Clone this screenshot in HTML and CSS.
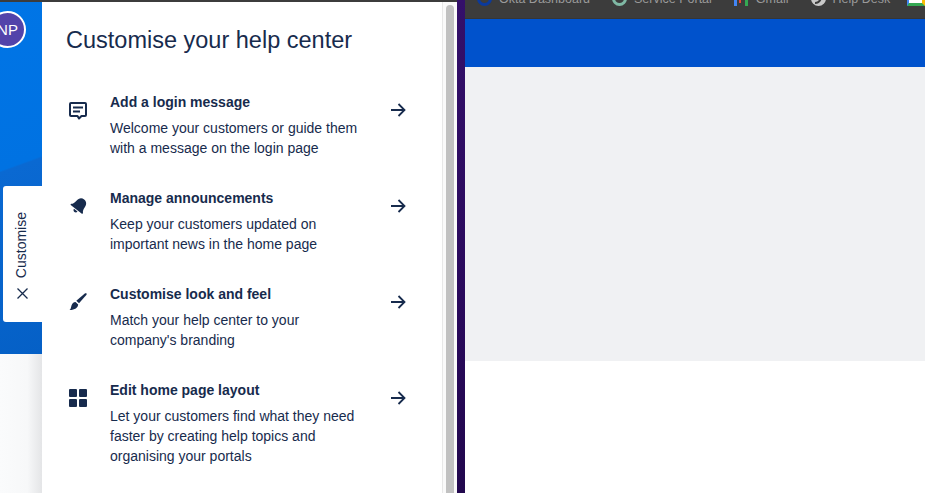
FILE: index.html
```html
<!DOCTYPE html>
<html lang="en">

<head>
    <meta charset="UTF-8">
    <meta name="viewport" content="width=device-width, initial-scale=1.0">
    <title>Customise your help center</title>
    <link rel="stylesheet" href="styles.css">
</head>

<body>
    <div class="left-window">
        <div class="top-strip"></div>
        <div class="workspace">
            <!-- Blue side strip -->
            <div class="sidebar">
                <div class="sidebar-blue">
                    <div class="avatar">NP</div>
                </div>
                <div class="tab">
                    <span class="tab-label">Customise</span>
                    <svg class="tab-close" width="11" height="11" viewBox="0 0 11 11">
                        <path d="M.5.5l10 10M10.500.5l-10 10" stroke="#172b4d" stroke-width="1.300" fill="none" />
                    </svg>
                </div>
            </div>

            <!-- Customise panel -->
            <div class="panel">
                <h1>Customise your help center</h1>

                <div class="row">
                    <svg class="row-icon" width="24" height="24" viewBox="0 0 24 24">
                        <path d="M5 5h14a1 1 0 0 1 1 1v11a1 1 0 0 1-1 1h-3.500L13 20.500 11.500 18H5a1 1 0 0 1-1-1V6a1 1 0 0 1 1-1z" fill="none" stroke="#172b4d" stroke-width="2" stroke-linejoin="round" />
                        <path d="M7 8.500h10v2H7zM7 12.500h7v2H7z" fill="#172b4d" />
                    </svg>
                    <div class="row-text">
                        <h2>Add a login message</h2>
                        <p>Welcome your customers or guide them<br>with a message on the login page</p>
                    </div>
                    <svg class="row-arrow" width="16" height="16" viewBox="0 0 16 16">
                        <path d="M1 8h13M8.500 2l6 6-6 6" fill="none" stroke="#172b4d" stroke-width="1.800" />
                    </svg>
                </div>

                <div class="row">
                    <svg class="row-icon" width="24" height="24" viewBox="0 0 24 24">
                        <g transform="translate(1 0) rotate(38 12 12) translate(12 12) scale(.88) translate(-12 -12)" fill="#172b4d">
                            <path d="M12 2.500c3.800 0 5.800 2.800 6 6.500.2 3 .8 5 2.500 6.500v1.500h-17v-1.500c1.700-1.500 2.300-3.500 2.500-6.500.2-3.700 2.200-6.500 6-6.500z" />
                            <path d="M9.500 18h5c0 1.500-1.100 2.500-2.500 2.500S9.500 19.500 9.500 18z" />
                        </g>
                    </svg>
                    <div class="row-text">
                        <h2>Manage announcements</h2>
                        <p>Keep your customers updated on<br>important news in the home page</p>
                    </div>
                    <svg class="row-arrow" width="16" height="16" viewBox="0 0 16 16">
                        <path d="M1 8h13M8.500 2l6 6-6 6" fill="none" stroke="#172b4d" stroke-width="1.800" />
                    </svg>
                </div>

                <div class="row">
                    <svg class="row-icon" width="24" height="24" viewBox="0 0 24 24">
                        <path d="M20.500 3.500c.4.400.200 1-.200 1.500l-7.300 8.200-2.700-2.500 8.500-7.200c.500-.400 1.300-.400 1.700 0z" fill="#172b4d" />
                        <path d="M9.500 12l2.700 2.500c-.300 3-3 5.500-8.700 5.500 1.500-1 1.300-2.500 2-4.500.600-1.800 2-3.400 4-3.500z" fill="#172b4d" />
                    </svg>
                    <div class="row-text">
                        <h2>Customise look and feel</h2>
                        <p>Match your help center to your<br>company's branding</p>
                    </div>
                    <svg class="row-arrow" width="16" height="16" viewBox="0 0 16 16">
                        <path d="M1 8h13M8.500 2l6 6-6 6" fill="none" stroke="#172b4d" stroke-width="1.800" />
                    </svg>
                </div>

                <div class="row">
                    <svg class="row-icon" width="24" height="24" viewBox="0 0 24 24">
                        <rect x="3" y="3" width="8" height="8" rx="1" fill="#172b4d" />
                        <rect x="13" y="3" width="8" height="8" rx="1" fill="#172b4d" />
                        <rect x="3" y="13" width="8" height="8" rx="1" fill="#172b4d" />
                        <rect x="13" y="13" width="8" height="8" rx="1" fill="#172b4d" />
                    </svg>
                    <div class="row-text">
                        <h2>Edit home page layout</h2>
                        <p>Let your customers find what they need<br>faster by creating help topics and<br>organising your portals</p>
                    </div>
                    <svg class="row-arrow" width="16" height="16" viewBox="0 0 16 16">
                        <path d="M1 8h13M8.500 2l6 6-6 6" fill="none" stroke="#172b4d" stroke-width="1.800" />
                    </svg>
                </div>
            </div>

            <div class="scroll-track">
                <div class="scroll-thumb"></div>
            </div>
        </div>
    </div>

    <div class="divider"></div>

    <div class="right-window">
        <!-- Bookmarks bar, cut off by the top of the picture -->
        <div class="bookmarks">
            <div class="bookmark okta">
                <span class="ring ring-okta"></span>
                <span>Okta Dashboard</span>
            </div>
            <div class="bookmark portal">
                <span class="ring ring-portal"></span>
                <span>Service Portal</span>
            </div>
            <div class="bookmark gmail">
                <svg width="14" height="14" viewBox="0 0 14 14">
                    <rect x="0" y="0" width="3" height="14" fill="#4285f4" />
                    <rect x="11" y="0" width="3" height="14" fill="#34a853" />
                    <rect x="5" y="8" width="2" height="3" fill="#ea4335" />
                </svg>
                <span>Gmail</span>
            </div>
            <div class="bookmark help">
                <svg width="15" height="15" viewBox="0 0 15 15">
                    <circle cx="7.500" cy="7.500" r="7.500" fill="#c8c8c8" />
                    <path d="M4 12c3 0 5-1.500 6-5" fill="none" stroke="#3c3c3c" stroke-width="2" />
                </svg>
                <span>Help Desk</span>
            </div>
            <div class="calendar"></div>
        </div>
        <div class="blue-band"></div>
        <div class="grey-band"></div>
    </div>
</body>

</html>
```

FILE: styles.css
```css
* {
    margin: 0;
    padding: 0;
    box-sizing: border-box;
    font-family: 'Liberation Sans', Arial, sans-serif;
}

body {
    display: flex;
    width: 925px;
    height: 493px;
    overflow: hidden;
    background-color: #fff;
    color: #172b4d;
}

.left-window {
    width: 457px;
    display: flex;
    flex-direction: column;
}

.top-strip {
    height: 2px;
    background-color: #3c3c3c;
}

.workspace {
    flex: 1;
    display: flex;
    min-height: 0;
}

.sidebar {
    width: 42px;
    position: relative;
    background: linear-gradient(90deg, #fafbfc 0%, #f7f8f9 65%, #e4e5e7 100%);
}

.sidebar-blue {
    height: 352px;
    padding-top: 9px;
    background: linear-gradient(160deg, #0075e6 0%, #0072e2 46%, #0a69d2 46.500%, #0560c6 100%);
    overflow: hidden;
}

.avatar {
    width: 37px;
    height: 37px;
    margin-left: -11px;
    border: 2px solid #fff;
    border-radius: 50%;
    background-color: #5243aa;
    color: #fff;
    font-size: 15px;
    line-height: 33px;
    text-align: center;
}

.tab {
    position: absolute;
    top: 184px;
    left: 3px;
    width: 39px;
    height: 136px;
    padding: 26px 0 23px;
    display: flex;
    flex-direction: column;
    justify-content: space-between;
    align-items: center;
    background-color: #fff;
    border-radius: 3px 0 0 3px;
}

.tab-label {
    writing-mode: vertical-rl;
    transform: rotate(180deg);
    margin-right: 4px;
    font-size: 14px;
    line-height: 16px;
}

.tab-close {
    flex: none;
}

.panel {
    width: 400px;
    padding: 0 0 0 24px;
    background-color: #fff;
    overflow: hidden;
}

h1 {
    margin-top: 24px;
    margin-bottom: 38px;
    font-size: 23.500px;
    font-weight: 400;
    line-height: 28px;
    white-space: nowrap;
}

.row {
    display: flex;
    align-items: flex-start;
    height: 96px;
}

.row-icon {
    flex: none;
    margin-top: 6px;
}

.row-text {
    width: 270px;
    margin-left: 20px;
}

h2 {
    font-size: 14px;
    font-weight: 700;
    line-height: 20px;
    margin-bottom: 6px;
}

.row-text p {
    font-size: 14px;
    line-height: 20px;
    white-space: nowrap;
}

.row-arrow {
    flex: none;
    margin-left: 10px;
    margin-top: 10px;
}

.scroll-track {
    width: 15px;
    padding: 3px 3px 0 3px;
    background-color: #fafafa;
    border-left: 1px solid #e8e8e8;
}

.scroll-thumb {
    height: 100%;
    background-color: #c1c1c1;
    border-radius: 4px 4px 0 0;
}

.divider {
    width: 8px;
    background: linear-gradient(180deg, #34106a 0%, #2a0a5c 60%, #22084e 100%);
}

.right-window {
    flex: 1;
    display: flex;
    flex-direction: column;
}

.bookmarks {
    height: 19px;
    background-color: #3c3c3c;
    border-bottom: 1px solid #363636;
    overflow: hidden;
    position: relative;
    display: flex;
    align-items: flex-start;
}

.bookmark {
    display: flex;
    align-items: center;
    gap: 7px;
    margin-top: -9px;
    height: 15px;
    font-size: 12.500px;
    color: #9a9a9a;
    white-space: nowrap;
}

.okta {
    margin-left: 12px;
}

.portal {
    margin-left: 22px;
}

.gmail {
    margin-left: 22px;
    gap: 8px;
}

.help {
    margin-left: 22px;
}

.ring {
    display: block;
    width: 15px;
    height: 15px;
    border-radius: 50%;
    border: 3px solid #0b3a9c;
}

.ring-portal {
    border-color: #7fb8a4;
}

.calendar {
    position: absolute;
    top: -4px;
    left: 442px;
    width: 18px;
    height: 10px;
    background-color: #fff;
    border-bottom: 3px solid #34a853;
    border-right: 3px solid #fbbc04;
    border-left: 2px solid #4285f4;
}

.blue-band {
    height: 48px;
    background-color: #0052cc;
}

.grey-band {
    height: 294px;
    background-color: #f0f1f3;
}
```
